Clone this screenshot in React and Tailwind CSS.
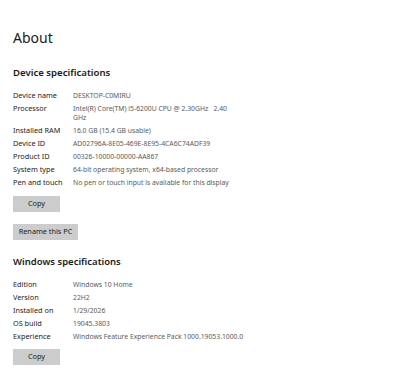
const device = [
  ["Device name", "DESKTOP-C0MIRU"],
  ["Processor", "Intel(R) Core(TM) i5-6200U CPU @ 2.30GHz   2.40\nGHz"],
  ["Installed RAM", "16.0 GB (15.4 GB usable)"],
  ["Device ID", "AD02796A-8E05-469E-8E95-4CA6C74ADF39"],
  ["Product ID", "00326-10000-00000-AA867"],
  ["System type", "64-bit operating system, x64-based processor"],
  ["Pen and touch", "No pen or touch input is available for this display"],
];

const windows = [
  ["Edition", "Windows 10 Home"],
  ["Version", "22H2"],
  ["Installed on", "1/29/2026"],
  ["OS build", "19045.3803"],
  ["Experience", "Windows Feature Experience Pack 1000.19053.1000.0"],
];

function SpecRows({ rows }) {
  return (
    <div className="flex flex-col">
      {rows.map(([label, value]) => (
        <div key={label} className="flex py-[2px] leading-[9px]">
          <div className="w-[60px] shrink-0 text-[7.3px] text-[#222]">{label}</div>
          <div className="whitespace-pre text-[6.8px] text-[#5a5a5a]">{value}</div>
        </div>
      ))}
    </div>
  );
}

function Button({ children, className = "" }) {
  return (
    <div className={`h-[16px] bg-[#cccccc] text-[#1a1a1a] text-[7.3px] flex items-center justify-center ${className}`}>
      {children}
    </div>
  );
}

export default function App() {
  return (
    <div
      className="w-[400px] h-[375px] bg-white pl-[13px] pt-[28px] overflow-hidden"
      style={{ fontFamily: '"Noto Sans", "Open Sans", sans-serif' }}
    >
      {/* Header */}
      <h1 className="text-[14px] leading-[20px] text-[#1a1a1a]">About</h1>

      {/* Device specifications */}
      <h2 className="mt-[18px] text-[9.6px] leading-[14px] font-semibold text-[#1a1a1a]">Device specifications</h2>
      <div className="mt-[9px]">
        <SpecRows rows={device} />
      </div>
      <Button className="mt-[6.5px] w-[47px]">Copy</Button>
      <Button className="mt-[12px] w-[65px]">Rename this PC</Button>

      {/* Windows specifications */}
      <h2 className="mt-[15px] text-[9.5px] leading-[14px] font-semibold text-[#1a1a1a]">Windows specifications</h2>
      <div className="mt-[9.5px]">
        <SpecRows rows={windows} />
      </div>
      <Button className="mt-[5.5px] w-[47px]">Copy</Button>
    </div>
  );
}
